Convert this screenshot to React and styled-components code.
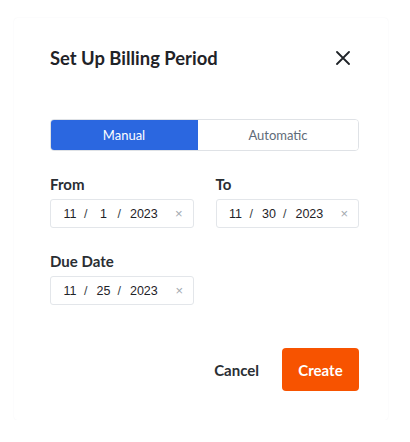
import styled, { createGlobalStyle } from 'styled-components';

const GlobalStyle = createGlobalStyle`
  body {
    margin: 0;
    background: #ffffff;
    font-family: Lato, "Noto Sans", sans-serif;
  }
`;

function DateInput({ month, day, year }) {
  return (
    <DateBox>
      <DatePart>{month}</DatePart>
      <Slash>/</Slash>
      <DatePart>{day}</DatePart>
      <Slash>/</Slash>
      <DatePart $wide>{year}</DatePart>
      <Clear>×</Clear>
    </DateBox>
  );
}

function App() {
  return (
    <>
      <GlobalStyle />
      <Dialog>
        <Header>
          <Title>Set Up Billing Period</Title>
          <CloseButton aria-label='Close'>
            <svg viewBox='0 0 14 14' width='14' height='14'>
              <path d='M1 1L13 13M13 1L1 13' stroke='#1f2328' strokeWidth='1.8' strokeLinecap='round' />
            </svg>
          </CloseButton>
        </Header>

        <Toggle>
          <ToggleOption $active $width='146px'>Manual</ToggleOption>
          <ToggleOption>Automatic</ToggleOption>
        </Toggle>

        <FieldRow>
          <Field>
            <Label>From</Label>
            <DateInput month='11' day='1' year='2023' />
          </Field>
          <Field>
            <Label>To</Label>
            <DateInput month='11' day='30' year='2023' />
          </Field>
        </FieldRow>

        <FieldRow>
          <Field>
            <Label>Due Date</Label>
            <DateInput month='11' day='25' year='2023' />
          </Field>
        </FieldRow>

        <Footer>
          <CancelButton>Cancel</CancelButton>
          <CreateButton>Create</CreateButton>
        </Footer>
      </Dialog>
    </>
  );
}

export default App;

const Dialog = styled.div`
  box-sizing: border-box;
  margin: 18px 0 0 14px;
  width: 374px;
  height: 402px;
  padding: 22px 29px 0 36px;
  background: #ffffff;
  border-radius: 4px;
  box-shadow: 0 0 2px rgba(0, 20, 60, 0.06);
  display: flex;
  flex-direction: column;
`;

const Header = styled.div`
  display: flex;
  align-items: center;
  justify-content: space-between;
  height: 36px;
`;

const Title = styled.h2`
  margin: 0;
  font-size: 18.4px;
  font-weight: 700;
  color: #1f2328;
`;

const CloseButton = styled.button`
  display: flex;
  align-items: center;
  justify-content: center;
  width: 24px;
  height: 24px;
  margin-right: 4px;
  padding: 0;
  border: none;
  background: none;
`;

const Toggle = styled.div`
  display: flex;
  margin-top: 43px;
  height: 32px;
  border: 1px solid #dfe2e6;
  border-radius: 4px;
  overflow: hidden;
  box-sizing: border-box;
`;

const ToggleOption = styled.div`
  flex: ${(p) => (p.$width ? `0 0 ${p.$width}` : '1')};
  display: flex;
  align-items: center;
  justify-content: center;
  font-size: 13px;
  color: ${(p) => (p.$active ? '#ffffff' : '#5f6b78')};
  background: ${(p) => (p.$active ? '#2b67e0' : '#ffffff')};
  border-right: ${(p) => (p.$active ? '1px solid #2b67e0' : 'none')};
`;

const FieldRow = styled.div`
  display: flex;
  gap: 22px;
  margin-top: 24px;
`;

const Field = styled.div`
  display: flex;
  flex-direction: column;
  width: 144px;
`;

const Label = styled.label`
  font-size: 15px;
  font-weight: 700;
  color: #2a2e33;
  margin-bottom: 6px;
`;

const DateBox = styled.div`
  box-sizing: border-box;
  display: flex;
  align-items: center;
  height: 29px;
  padding: 0 10px 0 12px;
  border: 1px solid #e3e6ea;
  border-radius: 3px;
  font-family: "Liberation Sans", Arial, sans-serif;
  font-size: 12.5px;
  color: #1f2328;
`;

const DatePart = styled.span`
  width: ${(p) => (p.$wide ? 'auto' : '14px')};
  text-align: center;
`;

const Slash = styled.span`
  margin: 0 9px 0 7px;
  color: #3a3f45;
`;

const Clear = styled.span`
  margin-left: auto;
  font-size: 13px;
  color: #a3a9b0;
`;

const Footer = styled.div`
  display: flex;
  justify-content: flex-end;
  align-items: center;
  gap: 23px;
  margin-top: 43px;
`;

const CancelButton = styled.button`
  border: none;
  background: none;
  padding: 0;
  font-family: Lato, "Noto Sans", sans-serif;
  font-size: 15px;
  font-weight: 700;
  color: #2a2e33;
`;

const CreateButton = styled.button`
  width: 77px;
  height: 43px;
  border: none;
  border-radius: 4px;
  background: #f75300;
  color: #ffffff;
  font-family: Lato, "Noto Sans", sans-serif;
  font-size: 15px;
  font-weight: 700;
`;
